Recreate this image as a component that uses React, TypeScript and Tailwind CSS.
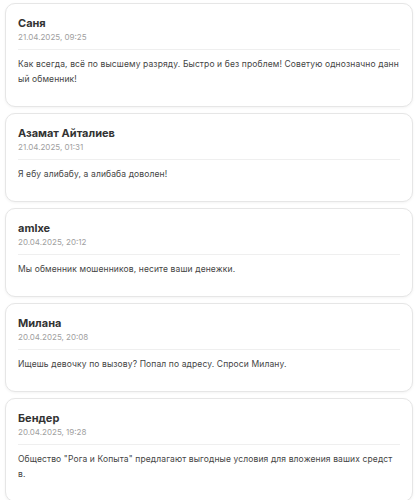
import React from "react";

type Review = {
  name: string;
  date: string;
  text: string;
};

const reviews: Review[] = [
  {
    name: "Саня",
    date: "21.04.2025, 09:25",
    text: "Как всегда, всё по высшему разряду. Быстро и без проблем! Советую однозначно данный обменник!",
  },
  {
    name: "Азамат Айталиев",
    date: "21.04.2025, 01:31",
    text: "Я ебу алибабу, а алибаба доволен!",
  },
  {
    name: "amlxe",
    date: "20.04.2025, 20:12",
    text: "Мы обменник мошенников, несите ваши денежки.",
  },
  {
    name: "Милана",
    date: "20.04.2025, 20:08",
    text: "Ищешь девочку по вызову? Попал по адресу. Спроси Милану.",
  },
  {
    name: "Бендер",
    date: "20.04.2025, 19:28",
    text: 'Общество "Рога и Копыта" предлагают выгодные условия для вложения ваших средств.',
  },
];

function ReviewCard({ review }: { review: Review }) {
  return (
    <div className="rounded-[10px] border border-[#e6e6e6] bg-white px-3 pt-3 pb-[19px] shadow-[0_1px_3px_rgba(0,0,0,0.05)]">
      <div className="text-[11px] font-bold leading-[14px] text-[#333]">{review.name}</div>
      <div className="mt-[1px] text-[8px] leading-[12px] text-[#a0a0a0]">{review.date}</div>
      <div className="mt-[6px] border-t border-[#efefef]" />
      <p className="pt-[7px] text-[8.5px] leading-[15px] tracking-[0.12px] text-[#444] break-all">{review.text}</p>
    </div>
  );
}

export default function App() {
  return (
    <div className="min-h-[500px] bg-white px-[5px] pt-[3px] font-['Inter','Noto_Sans',sans-serif]">
      <div className="flex w-[408px] flex-col gap-[6px]">
        {reviews.map((r) => (
          <ReviewCard key={r.date + r.name} review={r} />
        ))}
      </div>
    </div>
  );
}
